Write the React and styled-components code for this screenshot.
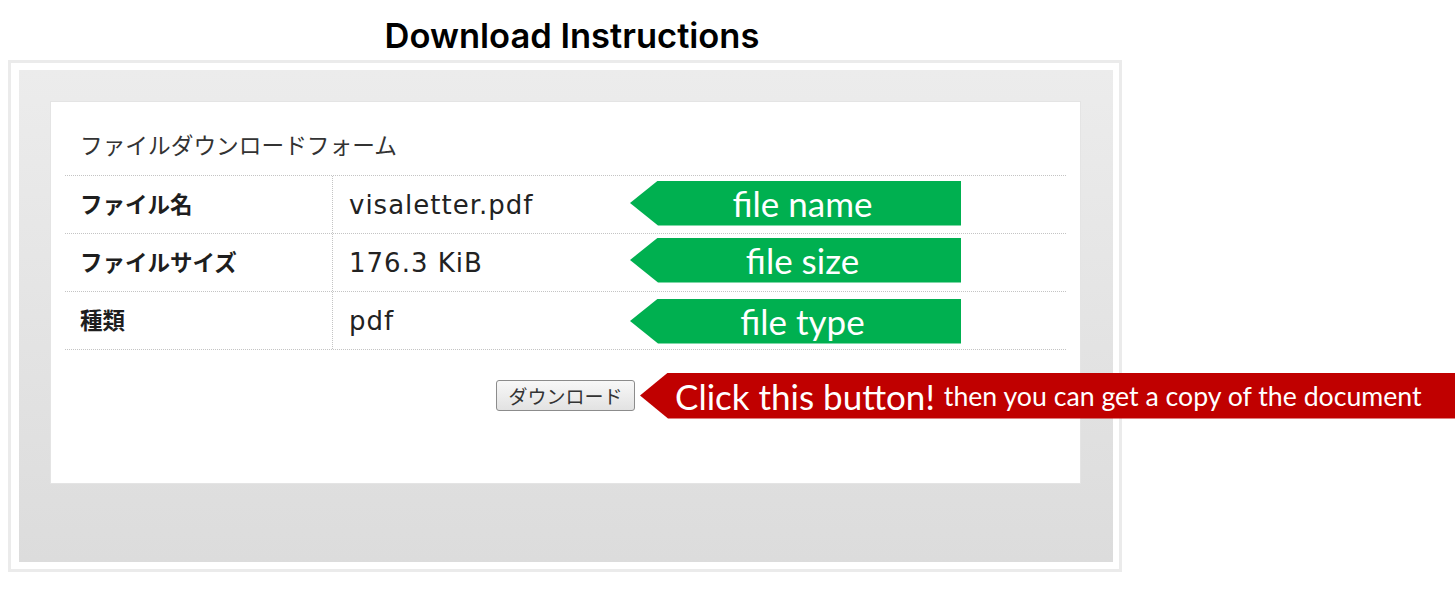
import React from "react";
import styled, { createGlobalStyle } from "styled-components";

const GlobalStyle = createGlobalStyle`
  html, body {
    margin: 0;
    padding: 0;
    background: #ffffff;
  }
  body {
    font-family: "Noto Sans CJK JP", "Noto Sans", sans-serif;
    overflow: hidden;
  }
`;

const Page = styled.div`
  width: 1455px;
  height: 589px;
  position: relative;
`;

const Title = styled.h1`
  margin: 0;
  width: 1144px;
  padding-top: 16px;
  height: 60px;
  box-sizing: border-box;
  text-align: center;
  font-family: "Inter", "Noto Sans", sans-serif;
  font-weight: 600;
  font-size: 34.5px;
  line-height: 40px;
  color: #000;
`;

const Frame = styled.div`
  margin-left: 8px;
  width: 1114px;
  height: 512px;
  box-sizing: border-box;
  border: 3px solid #ebebeb;
  padding: 7px 6px 7px 8px;
`;

const Backdrop = styled.div`
  height: 100%;
  box-sizing: border-box;
  background: linear-gradient(#ececec, #dcdcdc);
  padding: 31px 31px 0 31px;
`;

const Panel = styled.div`
  width: 1031px;
  height: 383px;
  box-sizing: border-box;
  background: #ffffff;
  border: 1px solid #e4e4e4;
  padding: 28px 14px 0 14px;
`;

const FormTitle = styled.div`
  font-size: 22.7px;
  line-height: 30px;
  color: #333;
  padding-left: 15px;
  margin-bottom: 15px;
`;

const Table = styled.div`
  width: 1001px;
  border-top: 1px dotted #c4c4c4;
`;

const Row = styled.div`
  display: grid;
  grid-template-columns: 267px 1fr;
  height: 58px;
  box-sizing: border-box;
  border-bottom: 1px dotted #c4c4c4;
`;

const Label = styled.div`
  display: flex;
  align-items: center;
  padding-left: 15px;
  padding-bottom: 3px;
  font-weight: 700;
  font-size: 22.5px;
  color: #1e1e1e;
`;

const ValueCell = styled.div`
  display: grid;
  grid-template-columns: 281px 331px;
  align-items: center;
  padding-left: 16px;
  border-left: 1px dotted #c4c4c4;
`;

const Value = styled.span`
  font-family: "DejaVu Sans", sans-serif;
  font-size: 26px;
  letter-spacing: 1px;
  color: #222;
`;

const Callout = styled.div`
  height: 45px;
  margin-top: ${(p) => p.$shift || 0}px;
  background: ${(p) => p.$color};
  clip-path: polygon(28px 0, 100% 0, 100% 100%, 28px 100%, 0 50%);
  display: flex;
  align-items: center;
  justify-content: center;
  padding-left: 14px;
  box-sizing: border-box;
  font-family: "Lato", "Open Sans", sans-serif;
  font-size: 35px;
  color: #ffffff;
  line-height: 1;
`;

const ButtonRow = styled.div`
  width: 1001px;
  display: flex;
  justify-content: center;
  margin-top: 30px;
`;

const ButtonWrap = styled.div`
  position: relative;
`;

const DownloadButton = styled.button`
  width: 139px;
  height: 31px;
  box-sizing: border-box;
  border: 1px solid #8c8c8c;
  border-radius: 3px;
  background: linear-gradient(#f8f8f8, #e2e2e2);
  font-family: "Noto Sans CJK JP", sans-serif;
  font-size: 19px;
  color: #333;
  padding: 0;
  cursor: pointer;
`;

const Banner = styled.div`
  position: absolute;
  left: calc(100% + 5px);
  top: 50%;
  transform: translateY(-50%);
  width: 815px;
  height: 46px;
  background: #c00000;
  clip-path: polygon(28px 0, 100% 0, 100% 100%, 28px 100%, 0 50%);
  display: flex;
  align-items: center;
  padding-left: 35px;
  box-sizing: border-box;
  color: #ffffff;
  font-family: "Lato", "Open Sans", sans-serif;
  white-space: nowrap;
`;

const BannerBig = styled.span`
  font-size: 35px;
  margin-right: 9px;
`;

const BannerSmall = styled.span`
  font-size: 26.7px;
`;

const rows = [
  { label: "ファイル名", value: "visaletter.pdf", note: "file name", shift: -3 },
  { label: "ファイルサイズ", value: "176.3 KiB", note: "file size", shift: -5 },
  { label: "種類", value: "pdf", note: "file type", shift: 1 },
];

export default function App() {
  return (
    <Page>
      <GlobalStyle />
      <Title>Download Instructions</Title>
      <Frame>
        <Backdrop>
          <Panel>
            <FormTitle>ファイルダウンロードフォーム</FormTitle>
            <Table>
              {rows.map((r) => (
                <Row key={r.label}>
                  <Label>{r.label}</Label>
                  <ValueCell>
                    <Value>{r.value}</Value>
                    <Callout $color="#00b050" $shift={r.shift}>
                      {r.note}
                    </Callout>
                  </ValueCell>
                </Row>
              ))}
            </Table>
            <ButtonRow>
              <ButtonWrap>
                <DownloadButton type="button">ダウンロード</DownloadButton>
                <Banner>
                  <BannerBig>Click this button!</BannerBig>
                  <BannerSmall>then you can get a copy of the document</BannerSmall>
                </Banner>
              </ButtonWrap>
            </ButtonRow>
          </Panel>
        </Backdrop>
      </Frame>
    </Page>
  );
}
